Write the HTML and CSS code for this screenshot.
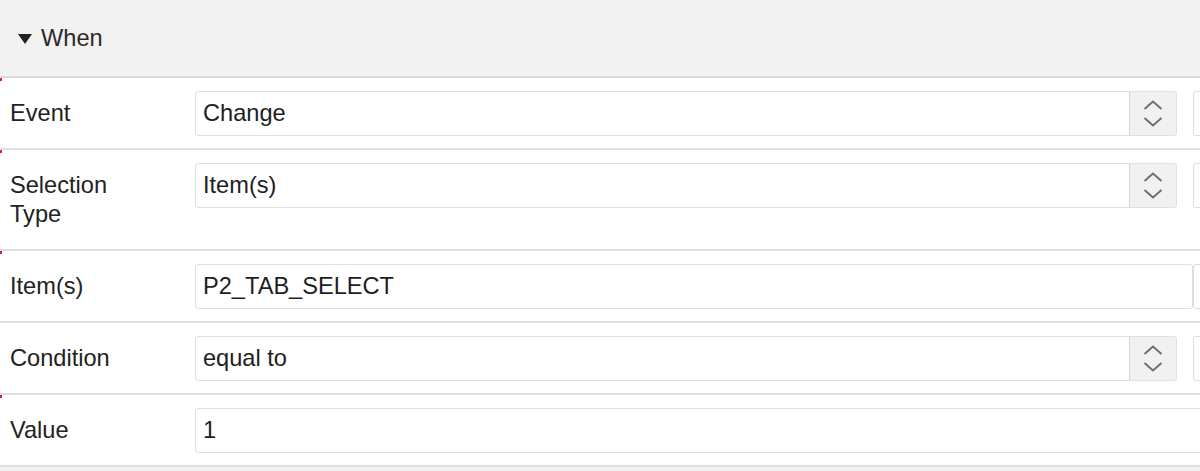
FILE: index.html
```html
<!DOCTYPE html>
<html>
<head>
<meta charset="utf-8">
<link rel="stylesheet" href="styles.css">
</head>
<body>
<div class="panel">
  <div class="header">
    <span class="caret"></span>
    <span class="title">When</span>
  </div>

  <div class="row required">
    <div class="label">Event</div>
    <div class="field">
      <div class="select">
        <span class="val">Change</span>
        <span class="spin">
          <svg width="20" height="30" viewBox="0 0 20 30"><path d="M1.5 10 L10 2.5 L18.5 10 M1.5 19 L10 26.5 L18.5 19" fill="none" stroke="#707070" stroke-width="2"/></svg>
        </span>
      </div>
      <div class="btn"></div>
    </div>
  </div>

  <div class="row required">
    <div class="label">Selection<br>Type</div>
    <div class="field">
      <div class="select">
        <span class="val">Item(s)</span>
        <span class="spin">
          <svg width="20" height="30" viewBox="0 0 20 30"><path d="M1.5 10 L10 2.5 L18.5 10 M1.5 19 L10 26.5 L18.5 19" fill="none" stroke="#707070" stroke-width="2"/></svg>
        </span>
      </div>
      <div class="btn"></div>
    </div>
  </div>

  <div class="row required">
    <div class="label">Item(s)</div>
    <div class="field tight">
      <div class="input"><span class="val">P2_TAB_SELECT</span></div>
      <div class="btn"></div>
    </div>
  </div>

  <div class="row">
    <div class="label">Condition</div>
    <div class="field">
      <div class="select">
        <span class="val">equal to</span>
        <span class="spin">
          <svg width="20" height="30" viewBox="0 0 20 30"><path d="M1.5 10 L10 2.5 L18.5 10 M1.5 19 L10 26.5 L18.5 19" fill="none" stroke="#707070" stroke-width="2"/></svg>
        </span>
      </div>
      <div class="btn"></div>
    </div>
  </div>

  <div class="row required">
    <div class="label">Value</div>
    <div class="field">
      <div class="input"><span class="val">1</span></div>
    </div>
  </div>
</div>
</body>
</html>
```
FILE: styles.css
```css
html, body {
  margin: 0;
  padding: 0;
  background: #f2f2f2;
  overflow: hidden;
}
body {
  width: 1200px;
  height: 471px;
  font-family: "Liberation Sans", Arial, sans-serif;
  font-size: 23.6px;
  color: #222;
}
.panel {
  width: 1240px;
}
.header {
  height: 76px;
  background: #f2f2f2;
  border-bottom: 2px solid #dcdcdc;
  display: flex;
  align-items: center;
  padding-left: 18px;
}
.caret {
  width: 0;
  height: 0;
  border-left: 7px solid transparent;
  border-right: 7px solid transparent;
  border-top: 10px solid #222;
  margin-right: 9px;
  margin-top: 1px;
}
.title {
  color: #2a2a2a;
}
.row {
  position: relative;
  display: flex;
  background: #fff;
  border-bottom: 2px solid #e0e0e0;
}
.row.required::before {
  content: "";
  position: absolute;
  left: 0;
  top: 0;
  width: 2px;
  height: 3px;
  background: #e8194a;
}
.label {
  width: 185px;
  padding: 21px 0 20px 10px;
  line-height: 29px;
  color: #222;
}
.field {
  flex: 1;
  display: flex;
  gap: 16px;
  padding-top: 13px;
  align-items: flex-start;
}
.field.tight {
  gap: 0;
}
.select, .input {
  flex: 1;
  height: 45px;
  box-sizing: border-box;
  border: 1px solid #e0e0e0;
  border-radius: 3px;
  display: flex;
  align-items: center;
  background: #fff;
}
.val {
  flex: 1;
  padding-left: 7px;
  color: #1e1e1e;
}
.spin {
  width: 46px;
  align-self: stretch;
  background: #f1f1f1;
  border-left: 1px solid #d4d4d4;
  border-radius: 0 3px 3px 0;
  display: flex;
  align-items: center;
  justify-content: center;
}
.spin svg {
  display: block;
}
.btn {
  width: 47px;
  height: 45px;
  box-sizing: border-box;
  border: 1px solid #dcdcdc;
  border-radius: 3px;
  background: #fff;
}
```
